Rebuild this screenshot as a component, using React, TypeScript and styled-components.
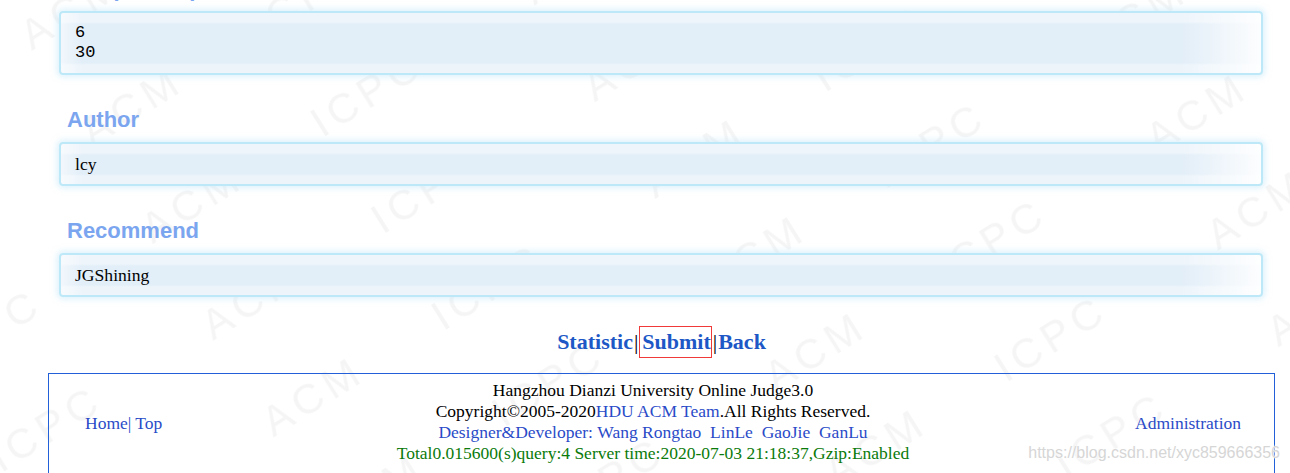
import React from 'react'
import styled, { createGlobalStyle } from 'styled-components'

const GlobalStyle = createGlobalStyle`
  html, body {
    margin: 0;
    padding: 0;
    background: #ffffff;
    font-family: "Liberation Serif", "Times New Roman", serif;
    overflow: hidden;
  }
`

const Screen = styled.div`
  position: relative;
  height: 473px;
  overflow: hidden;
  display: flow-root;
`

const Watermark = styled.svg`
  position: absolute;
  inset: 0;
  width: 100%;
  height: 100%;
  pointer-events: none;
  z-index: 0;
`

const Page = styled.div`
  position: relative;
  z-index: 1;
  width: 1227px;
  margin-left: 48px;
  display: flow-root;
`

const Title = styled.div<{ $first?: boolean }>`
  margin: ${p => (p.$first ? '-34px' : '22px')} 0 0 19px;
  height: 45px;
  line-height: 45px;
  font-family: "Liberation Sans", Arial, sans-serif;
  font-size: 22px;
  font-weight: bold;
  color: #7ba6ef;
`

const Panel = styled.div<{ $mono?: boolean }>`
  margin: 0 12px 0 11px;
  padding: 10px 14px;
  border: 2px solid #bde8f7;
  border-radius: 4px;
  box-shadow: 0 0 6px 2px rgba(190, 230, 248, 0.55);
  background:
    linear-gradient(to right, rgba(255,255,255,0.55), rgba(255,255,255,0) 22px, rgba(255,255,255,0) calc(100% - 80px), rgba(255,255,255,0.92)),
    linear-gradient(to bottom, #eef5fb 0, #eef5fb 9px, #e2eef8 11px, #e2eef8 calc(100% - 10px), #edf5fb calc(100% - 8px));
  font-family: ${p => (p.$mono ? '"Liberation Mono", "Courier New", monospace' : '"Liberation Serif", "Times New Roman", serif')};
  font-size: ${p => (p.$mono ? '17px' : '17.6px')};
  line-height: 20px;
  color: #000;
  white-space: pre;
`

const LinkRow = styled.div`
  margin-top: 29px;
  height: 32px;
  display: flex;
  justify-content: center;
  align-items: center;
  font-size: 22px;
  font-weight: bold;
`

const NavLink = styled.a<{ $boxed?: boolean }>`
  color: #1d58c6;
  text-decoration: none;
  line-height: 30px;
  ${p => p.$boxed && `
    border: 1px solid #f03a3a;
    padding-left: 2px;
  `}
`

const Pipe = styled.span`
  color: #000;
  font-weight: normal;
  padding: 0 1px;
`

const Footer = styled.div`
  margin-top: 15px;
  border: 1px solid #2160d6;
  display: grid;
  grid-template-columns: 240px 1fr 253px;
  align-items: center;
  padding: 6px 0 12px;
  font-size: 17.5px;
  line-height: 21px;
`

const SideCell = styled.div<{ $right?: boolean }>`
  text-align: ${p => (p.$right ? 'right' : 'left')};
  padding: ${p => (p.$right ? '3px 33px 0 0' : '3px 0 0 36px')};
  color: #2a4bc8;
`

const Center = styled.div`
  text-align: center;
  color: #000;
  padding-right: 4px;
`

const Blue = styled.span`
  color: #2a4bc8;
`

const Green = styled.div`
  color: #0a7a0a;
`

const Csdn = styled.div`
  position: absolute;
  right: 10px;
  top: 444px;
  z-index: 2;
  font-family: "Liberation Sans", Arial, sans-serif;
  font-size: 16px;
  color: #d6d6d6;
  text-shadow: 0 0 2px #fff, 0 0 2px #fff;
`

function App() {
  return (
    <Screen>
      <GlobalStyle />
      <Watermark>
        <defs>
          <pattern id="wm" width="450" height="114" patternUnits="userSpaceOnUse" patternTransform="rotate(-32)">
            <text x="0" y="60" fontFamily="Liberation Sans, Arial, sans-serif" fontSize="42" fill="#f5f5f5" letterSpacing="6">
              ACM
            </text>
            <text x="200" y="60" fontFamily="Liberation Sans, Arial, sans-serif" fontSize="42" fill="#f5f5f5" letterSpacing="6">
              ICPC
            </text>
          </pattern>
        </defs>
        <rect width="100%" height="100%" fill="url(#wm)" />
      </Watermark>

      <Page>
        <Title $first>Sample Output</Title>
        <Panel $mono>{'6\n30'}</Panel>

        <Title>Author</Title>
        <Panel>lcy</Panel>

        <Title>Recommend</Title>
        <Panel>JGShining</Panel>

        <LinkRow>
          <NavLink href="#">Statistic</NavLink>
          <Pipe>|</Pipe>
          <NavLink href="#" $boxed>Submit</NavLink>
          <Pipe>|</Pipe>
          <NavLink href="#">Back</NavLink>
        </LinkRow>

        <Footer>
          <SideCell>Home| Top</SideCell>
          <Center>
            <div>Hangzhou Dianzi University Online Judge3.0</div>
            <div>Copyright©2005-2020<Blue>HDU ACM Team</Blue>.All Rights Reserved.</div>
            <div><Blue>Designer&amp;Developer:&nbsp;Wang Rongtao&nbsp; LinLe&nbsp; GaoJie&nbsp; GanLu</Blue></div>
            <Green>Total0.015600(s)query:4 Server time:2020-07-03 21:18:37,Gzip:Enabled</Green>
          </Center>
          <SideCell $right>Administration</SideCell>
        </Footer>
      </Page>

      <Csdn>https://blog.csdn.net/xyc859666356</Csdn>
    </Screen>
  )
}

export default App
